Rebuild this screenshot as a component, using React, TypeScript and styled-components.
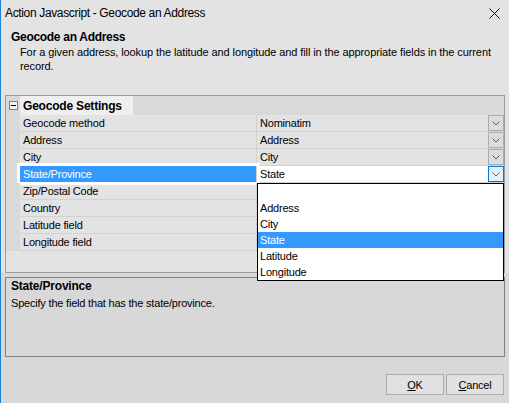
import React from 'react'
import styled, { createGlobalStyle } from 'styled-components'

const GlobalStyle = createGlobalStyle`
  html, body {
    margin: 0;
    padding: 0;
    background: #d8d8d8;
  }
  body {
    font-family: "Liberation Sans", Arial, sans-serif;
    font-size: 11px;
    letter-spacing: -0.2px;
    color: #000;
  }
  * {
    box-sizing: border-box;
  }
`

const Window = styled.div`
  width: 509px;
  height: 403px;
  border-left: 1px solid #1883d7;
  display: flex;
  flex-direction: column;
  overflow: hidden;
`

const TopArea = styled.div`
  background: #e3e3e3;
  display: flex;
  flex-direction: column;
`

const TitleBar = styled.div`
  height: 28px;
  display: flex;
  align-items: center;
  justify-content: space-between;
  padding: 0 9px 2px 4px;
  font-size: 12px;
  letter-spacing: -0.35px;
`

const Header = styled.div`
  padding: 2px 4px 0 10px;
  height: 67px;
`

const HeaderTitle = styled.div`
  font-weight: bold;
  font-size: 12px;
  line-height: 15px;
  letter-spacing: -0.3px;
`

const HeaderText = styled.div`
  padding-left: 9px;
  line-height: 14px;
  letter-spacing: -0.1px;
`

const Grid = styled.div`
  position: relative;
  margin: 0 4px;
  height: 178px;
  border: 1px solid #9c9c9c;
  display: flex;
  flex-direction: column;
  background: #e3e3e3;
`

const CategoryRow = styled.div`
  height: 19px;
  display: flex;
  align-items: center;
  background: #d9d9d9;
`

const Margin = styled.div`
  width: 14px;
  flex: none;
  align-self: stretch;
  display: flex;
  align-items: center;
  justify-content: center;
  background: #d9d9d9;
`

const Toggle = styled.div`
  width: 9px;
  height: 9px;
  border: 1px solid #808080;
  background: #f4f4f4;
  position: relative;
  margin-left: 1px;

  &::after {
    content: '';
    position: absolute;
    left: 1px;
    right: 1px;
    top: 3px;
    height: 1px;
    background: #000;
  }
`

const CategoryLabel = styled.div`
  align-self: stretch;
  display: flex;
  align-items: center;
  width: 113px;
  padding-left: 3px;
  background: #efefef;
  font-weight: bold;
  font-size: 12px;
  letter-spacing: -0.2px;
`

const Row = styled.div`
  height: 17px;
  display: flex;
`

const Cells = styled.div`
  flex: 1;
  display: flex;
  border-bottom: 1px solid #d2d2d2;
`

const Label = styled.div<{ $selected?: boolean }>`
  width: 237px;
  padding-left: 3px;
  display: flex;
  align-items: center;
  border-right: 1px solid #d2d2d2;
  background: ${(p) => (p.$selected ? '#3399ff' : 'transparent')};
  color: ${(p) => (p.$selected ? '#fff' : '#000')};
  outline: ${(p) => (p.$selected ? '3px solid #fff' : 'none')};
`

const Value = styled.div<{ $editing?: boolean }>`
  position: relative;
  flex: 1;
  display: flex;
  align-items: center;
  justify-content: space-between;
  padding-left: 3px;
  background: ${(p) => (p.$editing ? '#fff' : 'transparent')};
`

const DropButton = styled.div<{ $active?: boolean }>`
  width: 16px;
  height: 16px;
  display: flex;
  align-items: center;
  justify-content: center;
  border: 1px solid ${(p) => (p.$active ? '#0078d7' : '#adadad')};
  background: ${(p) => (p.$active ? '#e5f1fb' : '#dcdcdc')};
`

const ListBox = styled.div`
  position: absolute;
  left: 0;
  top: calc(100% + 1px);
  width: 247px;
  border: 1px solid #000;
  background: #fff;
  z-index: 2;
`

const ListItem = styled.div<{ $selected?: boolean }>`
  height: 16px;
  padding-left: 2px;
  display: flex;
  align-items: center;
  background: ${(p) => (p.$selected ? '#3399ff' : '#fff')};
  color: ${(p) => (p.$selected ? '#fff' : '#000')};
`

const BottomArea = styled.div`
  flex: 1;
  display: flex;
  flex-direction: column;
  padding: 4px 4px 0 4px;
  background: #d8d8d8;
`

const HelpBox = styled.div`
  height: 80px;
  border: 1px solid #828282;
  padding: 1px 5px;
  line-height: 14px;
`

const HelpTitle = styled.div`
  font-weight: bold;
  font-size: 12px;
`

const HelpText = styled.div`
  margin-top: 3px;
`

const ButtonRow = styled.div`
  display: flex;
  justify-content: flex-end;
  gap: 2px;
  margin-top: 17px;
  padding-right: 1px;
`

const Button = styled.div`
  width: 58px;
  height: 21px;
  display: flex;
  align-items: center;
  justify-content: center;
  border: 1px solid #adadad;
  background: #e1e1e1;

  u {
    text-decoration-thickness: 1px;
  }
`

const Chevron = () => (
  <svg width="8" height="5" viewBox="0 0 8 5">
    <path d="M0.5 0.5 L4 4 L7.5 0.5" fill="none" stroke="#606060" strokeWidth="1" />
  </svg>
)

const CloseIcon = () => (
  <svg width="11" height="11" viewBox="0 0 11 11">
    <path d="M0.5 0.5 L10.5 10.5 M10.5 0.5 L0.5 10.5" stroke="#111" strokeWidth="1" />
  </svg>
)

const properties = [
  { label: 'Geocode method', value: 'Nominatim' },
  { label: 'Address', value: 'Address' },
  { label: 'City', value: 'City' },
  { label: 'State/Province', value: 'State', selected: true },
  { label: 'Zip/Postal Code' },
  { label: 'Country' },
  { label: 'Latitude field' },
  { label: 'Longitude field' },
]

const choices = ['', 'Address', 'City', 'State', 'Latitude', 'Longitude']

const App = (): JSX.Element => {
  return (
    <>
      <GlobalStyle />
      <Window>
        <TopArea>
          <TitleBar>
            <span>Action Javascript - Geocode an Address</span>
            <CloseIcon />
          </TitleBar>
          <Header>
            <HeaderTitle>Geocode an Address</HeaderTitle>
            <HeaderText>
              For a given address, lookup the latitude and longitude and fill in the appropriate fields in the current
              record.
            </HeaderText>
          </Header>
          <Grid>
            <CategoryRow>
              <Margin>
                <Toggle />
              </Margin>
              <CategoryLabel>Geocode Settings</CategoryLabel>
            </CategoryRow>
            {properties.map((prop) => (
              <Row key={prop.label}>
                <Margin />
                <Cells>
                  <Label $selected={prop.selected}>{prop.label}</Label>
                  <Value $editing={prop.selected}>
                    {prop.value}
                    {prop.value && (
                      <DropButton $active={prop.selected}>
                        <Chevron />
                      </DropButton>
                    )}
                    {prop.selected && (
                      <ListBox>
                        {choices.map((c, i) => (
                          <ListItem key={i} $selected={c === prop.value}>
                            {c}
                          </ListItem>
                        ))}
                      </ListBox>
                    )}
                  </Value>
                </Cells>
              </Row>
            ))}
          </Grid>
        </TopArea>
        <BottomArea>
          <HelpBox>
            <HelpTitle>State/Province</HelpTitle>
            <HelpText>Specify the field that has the state/province.</HelpText>
          </HelpBox>
          <ButtonRow>
            <Button>
              <span>
                <u>O</u>K
              </span>
            </Button>
            <Button>
              <span>
                <u>C</u>ancel
              </span>
            </Button>
          </ButtonRow>
        </BottomArea>
      </Window>
    </>
  )
}

export default App
